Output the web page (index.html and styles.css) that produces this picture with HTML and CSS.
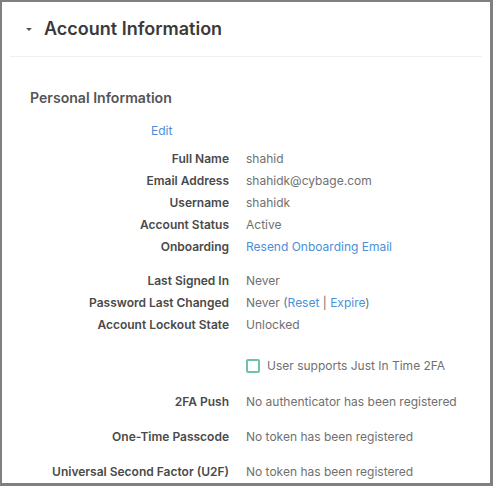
FILE: index.html
```html
<!DOCTYPE html>
<html>
<head>
<meta charset="utf-8">
<link rel="stylesheet" href="styles.css">
</head>
<body>
<div class="frame">
  <div class="header">
    <span class="caret"></span>
    <h1 class="title">Account Information</h1>
  </div>
  <div class="section">
    <h2 class="subtitle">Personal Information</h2>
    <div class="edit-row"><a class="link">Edit</a></div>
    <div class="grid">
      <div class="label">Full Name</div><div class="value">shahid</div>
      <div class="label">Email Address</div><div class="value">shahidk@cybage.com</div>
      <div class="label">Username</div><div class="value">shahidk</div>
      <div class="label">Account Status</div><div class="value">Active</div>
      <div class="label">Onboarding</div><div class="value"><a class="link">Resend Onboarding Email</a></div>
    </div>
    <div class="grid group2">
      <div class="label">Last Signed In</div><div class="value">Never</div>
      <div class="label">Password Last Changed</div><div class="value">Never (<a class="link">Reset</a> | <a class="link">Expire</a>)</div>
      <div class="label">Account Lockout State</div><div class="value">Unlocked</div>
    </div>
    <div class="grid group3">
      <div class="label"></div>
      <div class="value check"><span class="box"></span>User supports Just In Time 2FA</div>
    </div>
    <div class="grid group4">
      <div class="label">2FA Push</div><div class="value">No authenticator has been registered</div>
      <div class="label">One-Time Passcode</div><div class="value">No token has been registered</div>
      <div class="label">Universal Second Factor (U2F)</div><div class="value">No token has been registered</div>
    </div>
  </div>
</div>
</body>
</html>
```

FILE: styles.css
```css
html, body {
  margin: 0;
  padding: 0;
  background: #fff;
}
body {
  font-family: Inter, "Liberation Sans", sans-serif;
  color: #555;
}
.frame {
  box-sizing: border-box;
  width: 493px;
  height: 486px;
  border: 2px solid #808080;
  border-right-width: 3px;
  border-bottom-width: 3px;
  overflow: hidden;
  background: #fff;
}
.header {
  display: flex;
  align-items: center;
  margin: 0 8px;
  height: 53px;
  padding-left: 16px;
  padding-bottom: 1px;
  box-sizing: content-box;
  border-bottom: 1px solid #f0f0f0;
}
.caret {
  width: 0;
  height: 0;
  border-left: 3px solid transparent;
  border-right: 3px solid transparent;
  border-top: 3px solid #555;
  margin-right: 12px;
  margin-top: 2px;
}
.title {
  margin: 0;
  font-size: 18px;
  font-weight: 600;
  color: #3a3a3a;
}
.section {
  padding: 32px 0 0 28px;
}
.subtitle {
  margin: 0;
  font-size: 14.1px;
  font-weight: 600;
  color: #555;
}
.edit-row {
  padding-left: 121px;
  margin-top: 16px;
  font-size: 12px;
  line-height: 18px;
}
.link {
  color: #4a8fd9;
}
.grid {
  display: grid;
  grid-template-columns: 199px 1fr;
  column-gap: 17px;
  font-size: 12px;
  line-height: 22px;
  margin-top: 8px;
}
.label {
  text-align: right;
  font-weight: 600;
  color: #4a4a4a;
}
.value {
  color: #707070;
}
.group2 {
  margin-top: 12px;
}
.group3 {
  margin-top: 19px;
}
.check {
  display: flex;
  align-items: center;
}
.box {
  box-sizing: border-box;
  width: 14px;
  height: 14px;
  border: 2px solid #6cc4a4;
  border-radius: 2px;
  margin-right: 7px;
}
.group4 {
  margin-top: 14px;
  row-gap: 13px;
}
```
